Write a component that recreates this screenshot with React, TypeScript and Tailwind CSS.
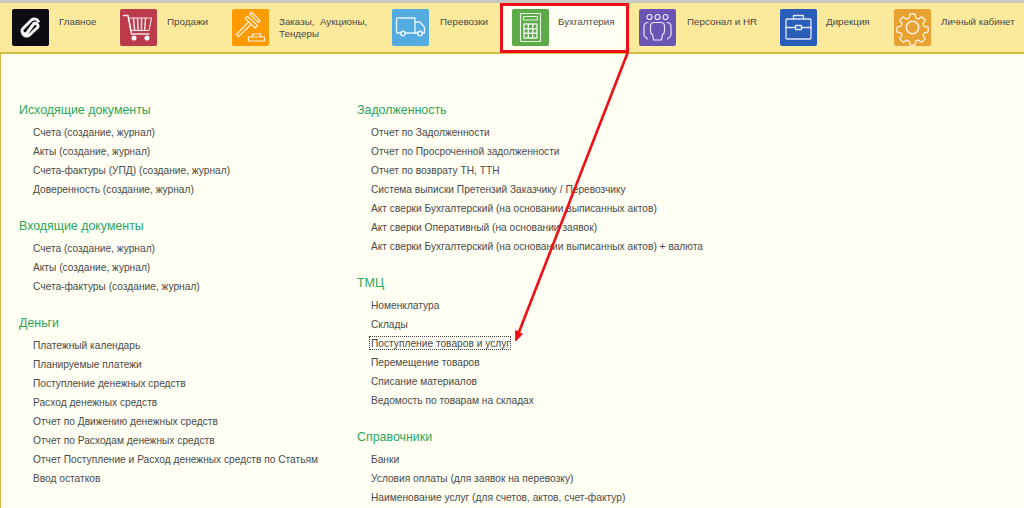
const tabs = [
  { label: "Главное", color: "bg-[#0e0c13]", icon: "logo", w: "w-[108px]", ml: "ml-[10px]" },
  { label: "Продажи", color: "bg-[#bb3a4b]", icon: "cart", w: "w-[112px]", ml: "ml-[10px]" },
  { label: "Заказы,  Аукционы, Тендеры", color: "bg-[#ff9a00]", icon: "gavel", w: "w-[160px]", ml: "ml-[10px]" },
  { label: "Перевозки", color: "bg-[#54abdf]", icon: "truck", w: "w-[120px]", ml: "ml-[11px]" },
  { label: "Бухгалтерия", color: "bg-[#5dab48]", icon: "calc", w: "w-[129px]", ml: "ml-[9px]" },
  { label: "Персонал и HR", color: "bg-[#6a55b4]", icon: "people", w: "w-[141px]", ml: "ml-[11px]" },
  { label: "Дирекция", color: "bg-[#2a5db8]", icon: "case", w: "w-[114px]", ml: "ml-[9px]" },
  { label: "Личный кабинет", color: "bg-[#e8a232]", icon: "gear", w: "w-[118px]", ml: "ml-[10px]" },
];

const leftColumn = [
  {
    title: "Исходящие документы",
    items: ["Счета (создание, журнал)", "Акты (создание, журнал)", "Счета-фактуры (УПД) (создание, журнал)", "Доверенность (создание, журнал)"],
  },
  {
    title: "Входящие документы",
    items: ["Счета (создание, журнал)", "Акты (создание, журнал)", "Счета-фактуры (создание, журнал)"],
  },
  {
    title: "Деньги",
    items: [
      "Платежный календарь",
      "Планируемые платежи",
      "Поступление денежных средств",
      "Расход денежных средств",
      "Отчет по Движению денежных средств",
      "Отчет по Расходам денежных средств",
      "Отчет Поступление и Расход денежных средств по Статьям",
      "Ввод остатков",
    ],
  },
];

const rightColumn = [
  {
    title: "Задолженность",
    items: [
      "Отчет по Задолженности",
      "Отчет по Просроченной задолженности",
      "Отчет по возврату ТН, ТТН",
      "Система выписки Претензий Заказчику / Перевозчику",
      "Акт сверки Бухгалтерский (на основании выписанных актов)",
      "Акт сверки Оперативный (на основании заявок)",
      "Акт сверки Бухгалтерский (на основании выписанных актов) + валюта",
    ],
  },
  {
    title: "ТМЦ",
    items: ["Номенклатура", "Склады", "Поступление товаров и услуг", "Перемещение товаров", "Списание материалов", "Ведомость по товарам на складах"],
  },
  {
    title: "Справочники",
    items: ["Банки", "Условия оплаты (для заявок на перевозку)", "Наименование услуг (для счетов, актов, счет-фактур)"],
  },
];

const TabIcon = ({ name }: { name: string }) => {
  const common = { fill: "none", stroke: "#fff", strokeOpacity: 0.85, strokeWidth: 1.2, strokeLinejoin: "round" as const, strokeLinecap: "round" as const };
  return (
    <svg viewBox="0 0 37 37" className="h-[37px] w-[37px]" {...common}>
      {name === "logo" && (
        <path
          d="M26.500 13.500C26 10 22 9 19.500 11L11 19.500A3 3 0 0 0 15 24L22 14.500A3 3 0 0 1 26 18L17.500 26C15 28 11 27 10.500 23.500"
          strokeWidth={3}
          strokeOpacity={1}
          stroke="#f4f4f4"
          strokeLinecap="butt"
        />
      )}
      {name === "cart" && (
        <g>
          <path d="M3.500 6.500h4.500l3.500 18.500h17.500" strokeWidth={1.5} />
          <path d="M8.500 9h23l-2.500 12.500H11z" />
          <path d="M13.500 9.500l1.200 12M17.500 9.500l.6 12M21.500 9.500v12M25.500 9.500l-.8 12" strokeWidth={1.5} />
          <circle cx="14" cy="29" r="2" fill="#fff" />
          <circle cx="27" cy="29" r="2" fill="#fff" />
        </g>
      )}
      {name === "gavel" && (
        <g>
          <path d="M17.500 5l1.800-1.800 9 8.500-1.800 1.800z" />
          <path d="M15.500 7.500l10 9-2.500 2.500-10-9.500z" />
          <path d="M16 13.500L4.500 25.500l2 2 12-11.500" />
          <path d="M20.500 25h8v3h-8zM16.500 28h16v4h-16z" />
        </g>
      )}
      {name === "truck" && (
        <g strokeWidth={1.4}>
          <path d="M9 24H6a1.500 1.500 0 0 1-1.500-1.500V10.500A1.500 1.500 0 0 1 6 9h17v15H13" />
          <path d="M23 13h5l4.500 5.500V24H30M23 24h3" />
          <circle cx="11" cy="24.500" r="2.300" />
          <circle cx="28" cy="24.500" r="2.300" />
        </g>
      )}
      {name === "calc" && (
        <g strokeWidth={1.1}>
          <rect x="8.500" y="4.500" width="20" height="28" />
          <rect x="11.500" y="7.500" width="14" height="3.500" />
          <path d="M12 15h13v14H12zM12 19.700h13M12 24.300h13M16.300 15v14M20.700 15v14" strokeWidth={1.4} />
        </g>
      )}
      {name === "people" && (
        <g>
          <circle cx="10.500" cy="8" r="2.500" />
          <circle cx="18.500" cy="8" r="2.500" />
          <circle cx="26.500" cy="8" r="2.500" />
          <path d="M8.500 30c-.5-1-3-1.500-3.500-4v-8c0-3 2-4.500 4-4.500" />
          <path d="M28.500 30c.5-1 3-1.500 3.500-4v-8c0-3-2-4.500-4-4.500" />
          <path d="M14.500 31l-.8-5c-1.500-1-2.200-2-2.200-4v-4.500c0-2.500 1.500-4 3.500-4h7c2 0 3.500 1.500 3.500 4V22c0 2-.7 3-2.200 4l-.8 5z" />
        </g>
      )}
      {name === "case" && (
        <g strokeWidth={1.3}>
          <rect x="6" y="10" width="25" height="20" rx="1" />
          <path d="M13.500 10V6.500h10V10" />
          <path d="M6 18.500h9.500M21.500 18.500H31" />
          <rect x="15.500" y="16.500" width="6" height="4" />
        </g>
      )}
      {name === "gear" && (
        <g strokeWidth={1.3}>
          <path d="M16 5h5l.8 4 2.600 1.100 3.400-2.300 3.500 3.500-2.300 3.400 1.100 2.600 4 .8v5l-4 .8-1.100 2.600 2.300 3.400-3.500 3.500-3.400-2.300-2.600 1.100-.8 4h-5l-.8-4-2.600-1.100-3.400 2.300-3.500-3.500 2.300-3.400-1.100-2.600-4-.8v-5l4-.8 1.100-2.600-2.300-3.400 3.500-3.500 3.400 2.300 2.600-1.100z" />
          <circle cx="18.500" cy="18.500" r="6.200" strokeWidth={1.500} />
        </g>
      )}
    </svg>
  );
};

const Column = ({ sections }: { sections: { title: string; items: string[] }[] }) => (
  <div className="flex flex-col gap-[17px]">
    {sections.map((section) => (
      <div key={section.title}>
        <h2 className="mb-[3px] h-[20px] text-[12.4px] leading-[20px] font-normal text-[#2aa55d]">{section.title}</h2>
        <ul className="pl-[14px]">
          {section.items.map((item) => (
            <li key={item} className="h-[19px] text-[10.2px] leading-[19px] whitespace-nowrap text-[#4a4a4a]">
              {item === "Поступление товаров и услуг" ? (
                <span className="-ml-[2px] inline-block h-[14px] border border-dotted border-[#444] pl-[1px] leading-[13px]">{item}</span>
              ) : (
                item
              )}
            </li>
          ))}
        </ul>
      </div>
    ))}
  </div>
);

export default function App() {
  return (
    <div className="relative h-[508px] w-[1024px] overflow-hidden bg-[#fffff3] font-['Liberation_Sans',Arial,sans-serif]">
      {/* top nav */}
      <div className="h-[3px] bg-[#c9c9c3]" />
      <div className="flex h-[51px] border-b-2 border-[#d6bd45] bg-[#fbe99c] pl-[12px]">
        {tabs.map((tab) => (
          <div
            key={tab.label}
            className={`flex shrink-0 items-start pt-[6px] ${tab.w} ${tab.icon === "calc" ? "-ml-[12px] mr-[10px] bg-[#fffff3] pl-[12px]" : ""}`}
          >
            <div className={`h-[37px] w-[37px] shrink-0 rounded-[2px] ${tab.color}`}>
              <TabIcon name={tab.icon} />
            </div>
            <span
              className={`mt-[7px] text-[9.8px] leading-[12px] text-[#4a4a4a] ${tab.ml} ${
                tab.icon === "gavel" ? "w-[105px] whitespace-pre-wrap" : "whitespace-nowrap"
              }`}
            >
              {tab.label}
            </span>
          </div>
        ))}
      </div>

      <div className="flex h-[454px] border-l border-[#d6bd45] pt-[46px]">
        <div className="w-[339px] shrink-0 pl-[18px]">
          <Column sections={leftColumn} />
        </div>
        <div className="shrink-0 pl-[17px]">
          <Column sections={rightColumn} />
        </div>
      </div>

      {/* annotation */}
      <div className="absolute top-[3px] left-[500px] h-[50px] w-[129px] border-[3px] border-[#ee0f14]" />
      <svg className="absolute inset-0" width="1024" height="508" viewBox="0 0 1024 508">
        <path d="M627.500 53L519 332" stroke="#ee0f14" strokeWidth="2.600" fill="none" />
        <path d="M515.700 341L515.700 330.500 522.500 334z" fill="#ee0f14" stroke="#ee0f14" />
      </svg>
    </div>
  );
}
